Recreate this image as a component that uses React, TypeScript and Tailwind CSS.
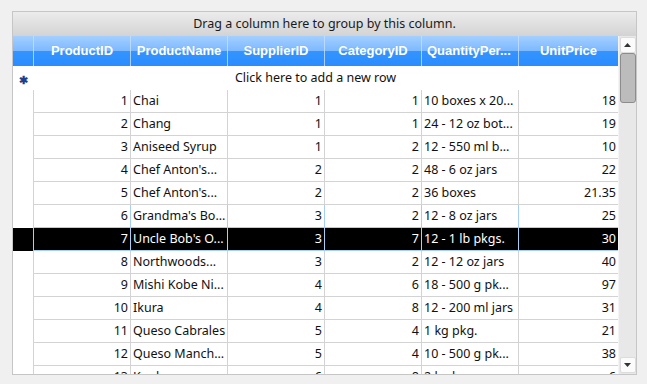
import React from "react"

const products = [
  { id: 1, name: "Chai", supplier: 1, category: 1, qty: "10 boxes x 20...", price: "18" },
  { id: 2, name: "Chang", supplier: 1, category: 1, qty: "24 - 12 oz bot...", price: "19" },
  { id: 3, name: "Aniseed Syrup", supplier: 1, category: 2, qty: "12 - 550 ml b...", price: "10" },
  { id: 4, name: "Chef Anton's...", supplier: 2, category: 2, qty: "48 - 6 oz jars", price: "22" },
  { id: 5, name: "Chef Anton's...", supplier: 2, category: 2, qty: "36 boxes", price: "21.35" },
  { id: 6, name: "Grandma's Bo...", supplier: 3, category: 2, qty: "12 - 8 oz jars", price: "25" },
  { id: 7, name: "Uncle Bob's O...", supplier: 3, category: 7, qty: "12 - 1 lb pkgs.", price: "30" },
  { id: 8, name: "Northwoods...", supplier: 3, category: 2, qty: "12 - 12 oz jars", price: "40" },
  { id: 9, name: "Mishi Kobe Ni...", supplier: 4, category: 6, qty: "18 - 500 g pk...", price: "97" },
  { id: 10, name: "Ikura", supplier: 4, category: 8, qty: "12 - 200 ml jars", price: "31" },
  { id: 11, name: "Queso Cabrales", supplier: 5, category: 4, qty: "1 kg pkg.", price: "21" },
  { id: 12, name: "Queso Manch...", supplier: 5, category: 4, qty: "10 - 500 g pk...", price: "38" },
  { id: 13, name: "Konbu", supplier: 6, category: 8, qty: "2 kg box", price: "6" },
]

const columns = ["ProductID", "ProductName", "SupplierID", "CategoryID", "QuantityPer...", "UnitPrice"]

const SELECTED = 6

const App = () => {
  return (
    <div className="w-[647px] h-[384px] bg-[#f0f0f0] pl-[12px] pt-[11px] font-['Noto_Sans',sans-serif] text-[12.5px] text-[#111]">
      <div className="w-[625px] h-[364px] border border-[#c6c6c6] bg-white flex flex-col overflow-hidden">
        {/* group panel */}
        <div className="h-[24px] shrink-0 flex items-center justify-center bg-[linear-gradient(to_bottom,#ececec,#d3d3d3)] text-[#1a1a1a]">
          Drag a column here to group by this column.
        </div>

        <div className="flex flex-1 min-h-0">
          <div className="w-[605px] flex flex-col overflow-hidden">
            {/* header */}
            <div className="h-[30px] shrink-0 flex bg-[linear-gradient(to_bottom,#a3cfff_0%,#7cb9ff_50%,#3494ff_50%,#2a8cff_100%)] font-['Liberation_Sans',sans-serif] font-bold text-[13px] text-white">
              <div className="w-[21px] border-r border-[#c4e0ff]/80" />
              {columns.map((c, i) => (
                <div
                  key={c}
                  className={
                    i === 5
                      ? "w-[99px] flex items-center justify-center [text-shadow:0_0_1px_#5a9ee8]"
                      : i === 4
                        ? "w-[97px] border-r border-[#c4e0ff]/80 flex items-center pl-[5px] [text-shadow:0_0_1px_#5a9ee8]"
                        : "w-[97px] border-r border-[#c4e0ff]/80 flex items-center justify-center [text-shadow:0_0_1px_#5a9ee8]"
                  }
                >
                  {c}
                </div>
              ))}
            </div>

            {/* new row */}
            <div className="h-[24px] shrink-0 flex items-center">
              <div className="w-[21px] flex justify-center text-[#1d3f8c] font-bold text-[11px] leading-none pt-[2px]">✱</div>
              <div className="flex-1 text-center pr-[21px]">Click here to add a new row</div>
            </div>

            {/* rows */}
            {products.map((p, i) => {
              const sel = i === SELECTED
              const line = i === SELECTED || i === SELECTED - 1 ? "border-[#a6cff5]" : "border-[#d3d3d3]"
              const cell = `h-[23px] shrink-0 border-b ${line} flex items-center whitespace-nowrap overflow-hidden`
              return (
                <div key={p.id} className={sel ? "flex bg-black text-white" : "flex"}>
                  <div className={sel ? "w-[21px] h-[23px] shrink-0 border-r border-[#a6cff5]" : "w-[21px] h-[23px] shrink-0 border-r border-[#d3d3d3]"} />
                  <div className={`${cell} w-[97px] border-r justify-end pr-[2px]`}>{p.id}</div>
                  <div className={`${cell} w-[97px] border-r pl-[2px]`}>{p.name}</div>
                  <div className={`${cell} w-[97px] border-r justify-end pr-[2px]`}>{p.supplier}</div>
                  <div className={`${cell} w-[97px] border-r justify-end pr-[2px]`}>{p.category}</div>
                  <div className={`${cell} w-[97px] border-r pl-[2px]`}>{p.qty}</div>
                  <div className={`${cell} w-[99px] justify-end pr-[2px]`}>{p.price}</div>
                </div>
              )
            })}
          </div>

          {/* scrollbar */}
          <div className="w-[18px] bg-[#e8e8e8] border-l border-[#f4f4f4] flex flex-col items-center py-[1px]">
            <div className="w-[16px] h-[16px] bg-[#fbfbfb] border border-[#dcdcdc] rounded-[2px] flex items-center justify-center">
              <svg width="7" height="4" viewBox="0 0 7 4">
                <path d="M0 4 L3.5 0 L7 4 Z" fill="#333" />
              </svg>
            </div>
            <div className="w-[16px] h-[50px] bg-[#bcbcbc] border border-[#8c8c8c] rounded-[3px]" />
            <div className="flex-1" />
            <div className="w-[16px] h-[16px] bg-[#fbfbfb] border border-[#dcdcdc] rounded-[2px] flex items-center justify-center">
              <svg width="7" height="4" viewBox="0 0 7 4">
                <path d="M0 0 L7 0 L3.5 4 Z" fill="#333" />
              </svg>
            </div>
          </div>
        </div>
      </div>
    </div>
  )
}

export default App
